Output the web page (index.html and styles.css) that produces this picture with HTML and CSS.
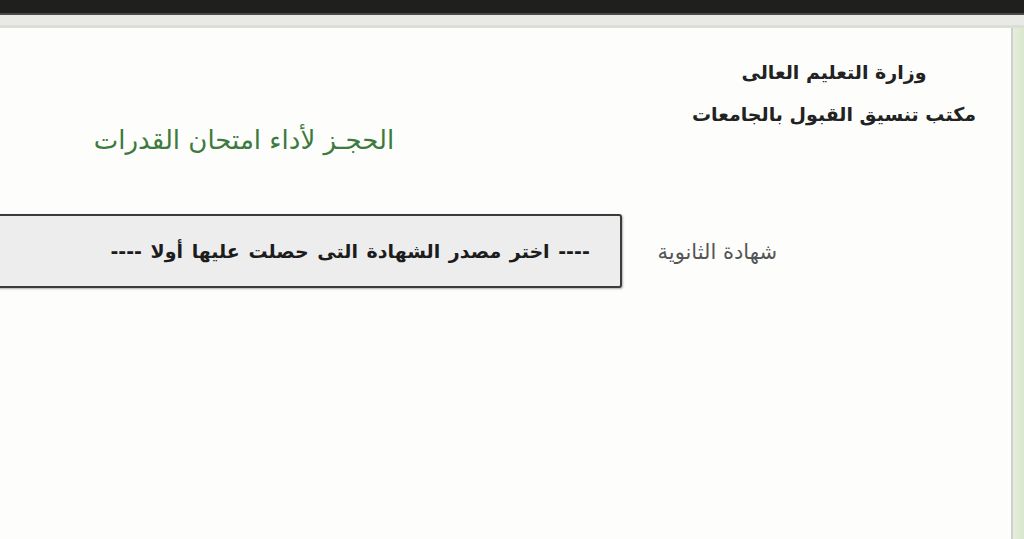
FILE: index.html
```html
<!DOCTYPE html>
<html lang="ar" dir="rtl">
<head>
<meta charset="utf-8">
<link rel="stylesheet" href="styles.css">
</head>
<body>
<div class="topbar"></div>
<div class="band"></div>
<div class="main">
  <div class="panel">
    <div class="header">
      <div class="h-line">وزارة التعليم العالى</div>
      <div class="h-line">مكتب تنسيق القبول بالجامعات</div>
    </div>
    <div class="title">الحجـز لأداء امتحان القدرات</div>
    <div class="row">
      <div class="label">شهادة الثانوية</div>
      <div class="select">---- اختر مصدر الشهادة التى حصلت عليها أولا ----</div>
    </div>
  </div>
  <div class="side"></div>
</div>
</body>
</html>
```
FILE: styles.css
```css
html, body {
  margin: 0;
  padding: 0;
  height: 100%;
  overflow: hidden;
}
body {
  background: #dfe8d3;
  font-family: "DejaVu Sans", sans-serif;
  direction: rtl;
}
.topbar {
  height: 13px;
  background: #1f201e;
  border-bottom: 2px solid #4a4b47;
}
.band {
  height: 10px;
  background: #e9eae5;
  border-bottom: 3px solid #dcddd7;
}
.main {
  display: flex;
  direction: ltr;
  height: 520px;
}
.panel {
  direction: rtl;
  width: 1061px;
  margin-left: -50px;
  flex: none;
  background: #fdfefc;
  border-right: 2px solid #cfd0cb;
}
.side {
  flex: 1;
  background: linear-gradient(to right, #e6eede, #d9e6cc);
}
.header {
  display: flex;
  flex-direction: column;
  align-items: center;
  width: 320px;
  padding-top: 23px;
  margin-right: 17px;
}
.h-line {
  font-size: 19px;
  font-weight: bold;
  color: #222;
  line-height: 42px;
}
.title {
  width: 420px;
  margin-right: 557px;
  margin-top: -15px;
  text-align: center;
  color: #3c7a3e;
  font-size: 26px;
  line-height: 40px;
}
.row {
  display: flex;
  align-items: center;
  margin-top: 54px;
}
.label {
  width: 150px;
  margin-right: 234px;
  color: #555;
  font-size: 21px;
  text-align: right;
  padding-top: 2px;
}
.select {
  width: 675px;
  height: 74px;
  margin-right: 6px;
  border: 2px solid #3b3b3b;
  border-radius: 3px;
  background: #ededee;
  box-shadow: 1px 1px 2px rgba(0,0,0,0.3);
  font-size: 19px;
  font-weight: bold;
  word-spacing: 2px;
  color: #1c1c1c;
  display: flex;
  align-items: center;
  padding-right: 30px;
  box-sizing: border-box;
}
```
